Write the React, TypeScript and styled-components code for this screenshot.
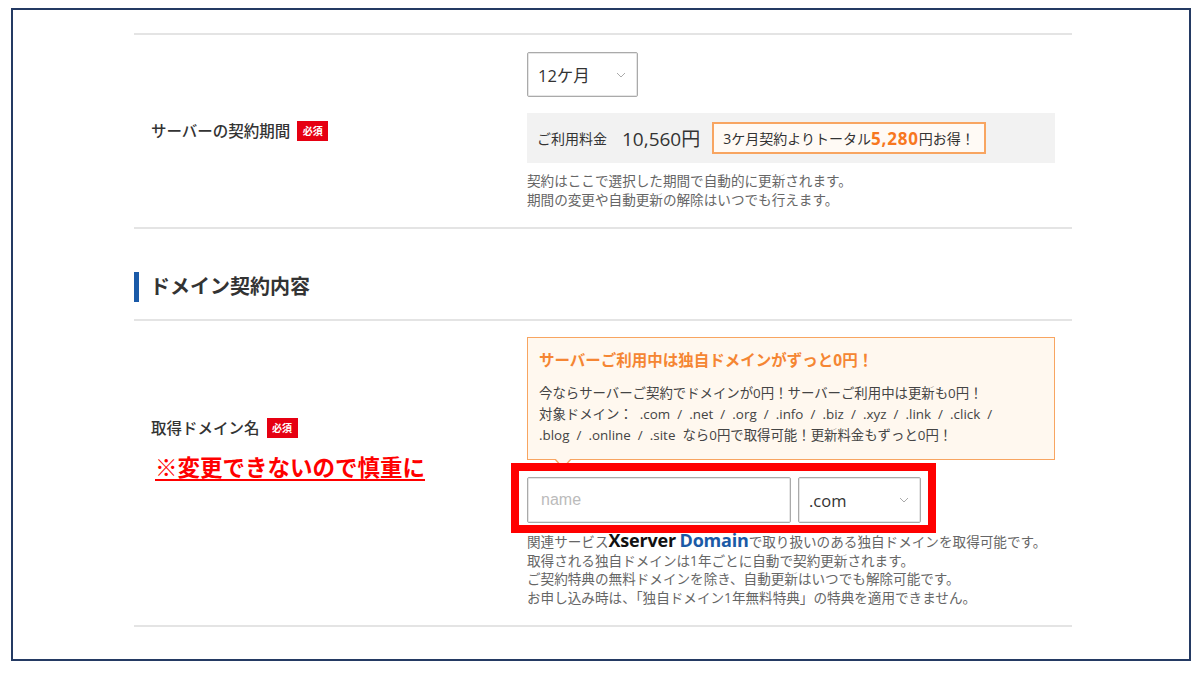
import styled, { createGlobalStyle } from "styled-components";

const GlobalStyle = createGlobalStyle`
  body {
    margin: 0;
    background: #fff;
    font-family: "Open Sans", "Noto Sans CJK JP", sans-serif;
    color: #333;
  }
`;

const Frame = styled.div`
  box-sizing: border-box;
  margin: 8px 0 0 11px;
  width: 1180px;
  height: 653px;
  border: 2px solid #243a63;
  padding: 23px 0 0 121px;
  overflow: hidden;
`;

const Content = styled.div`
  width: 938px;
`;

const Row = styled.div<{ $pad: string; $last?: boolean }>`
  display: grid;
  grid-template-columns: 393px 528px;
  border-top: 2px solid #e4e4e4;
  border-bottom: ${(p) => (p.$last ? "2px solid #e4e4e4" : "none")};
  padding: ${(p) => p.$pad};
`;

const LabelCell = styled.div<{ $shift?: number }>`
  display: flex;
  flex-direction: column;
  justify-content: center;
  padding-left: 17px;
  padding-bottom: ${(p) => p.$shift || 0}px;
`;

const Label = styled.div`
  display: flex;
  align-items: center;
  gap: 7px;
  font-size: 15.5px;
  line-height: 22px;
  font-weight: 500;
  color: #333;
`;

const Badge = styled.span`
  display: inline-flex;
  align-items: center;
  justify-content: center;
  width: 31px;
  height: 20px;
  background: #e60012;
  color: #fff;
  font-size: 10px;
  font-weight: 700;
`;

const RedNote = styled.div`
  margin: 14px 0 0 4px;
  font-size: 22.5px;
  line-height: 30px;
  font-weight: 700;
  color: #f00;
  text-decoration: underline;
  text-underline-offset: 3px;
`;

const Field = styled.div`
  display: flex;
  flex-direction: column;
`;

const SelectBox = styled.div<{ $w: number }>`
  box-sizing: border-box;
  display: flex;
  align-items: center;
  justify-content: space-between;
  width: ${(p) => p.$w}px;
  height: ${(p) => (p.$w > 115 ? 46 : 45)}px;
  border: 1px solid #aaa;
  border-radius: 2px;
  box-shadow: inset 0 0 0 1px #e6e6e6;
  padding: 0 11px 0 10px;
  font-size: 16.5px;
  color: #333;
  background: #fff;
`;

const Chevron = () => (
  <svg width="10" height="6" viewBox="0 0 10 6">
    <path d="M1 1l4 4 4-4" fill="none" stroke="#aaa" strokeWidth="1" />
  </svg>
);

const PriceBar = styled.div`
  display: flex;
  align-items: center;
  margin-top: 16px;
  height: 50px;
  padding-left: 10px;
  background: #f2f2f2;
`;

const PriceLabel = styled.span`
  font-size: 14px;
  color: #333;
`;

const Price = styled.span`
  margin-left: 15px;
  font-size: 19px;
  color: #333;
`;

const Deal = styled.span`
  box-sizing: border-box;
  display: flex;
  align-items: center;
  margin-left: 12px;
  height: 32px;
  padding: 0 9px 0 9px;
  border: 2px solid #f8a561;
  background: #fffaf5;
  font-size: 14px;
  color: #333;
`;

const DealStrong = styled.b`
  font-size: 17px;
  letter-spacing: 0.8px;
  color: #f7781f;
`;

const Notes = styled.div<{ $top: number }>`
  margin-top: ${(p) => p.$top}px;
  font-size: 13.6px;
  line-height: 18.5px;
  color: #666;
`;

const Brand = styled.b<{ $blue?: boolean }>`
  font-family: "Open Sans", "Liberation Sans", sans-serif;
  font-size: 18px;
  font-weight: 700;
  letter-spacing: -0.2px;
  color: ${(p) => (p.$blue ? "#1b5aa6" : "#111")};
`;

const Heading = styled.div`
  border-top: 2px solid #e4e4e4;
  padding: 43px 0 17px;
`;

const HeadingText = styled.h2`
  margin: 0;
  border-left: 5px solid #1a5aa8;
  padding-left: 11px;
  font-size: 20px;
  line-height: 30px;
  font-weight: 700;
  color: #333;
`;

const Callout = styled.div`
  position: relative;
  box-sizing: border-box;
  height: 123px;
  padding: 10px 10px 0 11px;
  border: 1px solid #f8a561;
  background: #fff8ef;
  &::before,
  &::after {
    content: "";
    position: absolute;
    left: 26px;
    border-style: solid;
    border-color: transparent;
  }
  &::before {
    bottom: -10px;
    border-width: 10px 9px 0;
    border-top-color: #f8a561;
  }
  &::after {
    left: 27px;
    bottom: -8px;
    border-width: 9px 8px 0;
    border-top-color: #fff8ef;
  }
`;

const CalloutTitle = styled.div`
  font-size: 15.5px;
  line-height: 24px;
  font-weight: 700;
  color: #f58633;
`;

const CalloutBody = styled.div`
  margin-top: 11px;
  font-size: 13.4px;
  line-height: 21px;
  word-spacing: 3.6px;
  color: #444;
`;

const InputRow = styled.div`
  position: relative;
  display: flex;
  gap: 7px;
  margin-top: 17px;
`;

const NameInput = styled.input`
  box-sizing: border-box;
  width: 264px;
  height: 46px;
  border: 1px solid #aaa;
  border-radius: 2px;
  box-shadow: inset 0 0 0 1px #e6e6e6;
  padding: 0 13px;
  font-family: "Liberation Sans", sans-serif;
  font-size: 16px;
  outline: none;
  &::placeholder {
    color: #bbb;
  }
`;

const Highlight = styled.div`
  position: absolute;
  left: -16px;
  top: -14px;
  width: 425px;
  height: 70px;
  box-sizing: border-box;
  border: 8px solid #f00;
  pointer-events: none;
`;

export default function App() {
  return (
    <>
      <GlobalStyle />
      <Frame>
        <Content>
          <Row $pad="17px 0 18px">
            <LabelCell>
              <Label>
                サーバーの契約期間<Badge>必須</Badge>
              </Label>
            </LabelCell>
            <Field>
              <SelectBox $w={111}>
                12ケ月
                <Chevron />
              </SelectBox>
              <PriceBar>
                <PriceLabel>ご利用料金</PriceLabel>
                <Price>10,560円</Price>
                <Deal>
                  3ケ月契約よりトータル<DealStrong>5,280</DealStrong>円お得！
                </Deal>
              </PriceBar>
              <Notes $top={9}>
                契約はここで選択した期間で自動的に更新されます。
                <br />
                期間の変更や自動更新の解除はいつでも行えます。
              </Notes>
            </Field>
          </Row>

          <Heading>
            <HeadingText>ドメイン契約内容</HeadingText>
          </Heading>

          <Row $pad="16px 0 18px" $last>
            <LabelCell $shift={44}>
              <Label>
                取得ドメイン名<Badge>必須</Badge>
              </Label>
              <RedNote>※変更できないので慎重に</RedNote>
            </LabelCell>
            <Field>
              <Callout>
                <CalloutTitle>サーバーご利用中は独自ドメインがずっと0円！</CalloutTitle>
                <CalloutBody>
                  今ならサーバーご契約でドメインが0円！サーバーご利用中は更新も0円！
                  <br />
                  対象ドメイン： .com / .net / .org / .info / .biz / .xyz / .link / .click /
                  <br />
                  .blog / .online / .site なら0円で取得可能！更新料金もずっと0円！
                </CalloutBody>
              </Callout>
              <InputRow>
                <NameInput placeholder="name" />
                <SelectBox $w={123}>
                  .com
                  <Chevron />
                </SelectBox>
                <Highlight />
              </InputRow>
              <Notes $top={8}>
                関連サービス<Brand>Xserver</Brand> <Brand $blue>Domain</Brand>
                で取り扱いのある独自ドメインを取得可能です。
                <br />
                取得される独自ドメインは1年ごとに自動で契約更新されます。
                <br />
                ご契約特典の無料ドメインを除き、自動更新はいつでも解除可能です。
                <br />
                お申し込み時は、「独自ドメイン1年無料特典」の特典を適用できません。
              </Notes>
            </Field>
          </Row>
        </Content>
      </Frame>
    </>
  );
}
